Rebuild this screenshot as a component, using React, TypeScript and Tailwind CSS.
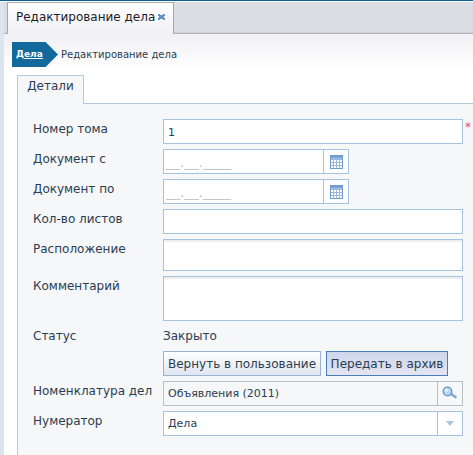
import type { ReactNode } from "react";

function CalendarIcon() {
  return (
    <svg width="13" height="14" viewBox="0 0 13 14" shapeRendering="crispEdges" aria-hidden="true">
      <path fill="#6f9bd0" d="M0 0h13v14H0z" />
      <path fill="#85aad6" d="M1 2h11v1H1z" />
      <path fill="#9bb9df" d="M1 3h11v10H1z" />
      {[5, 8, 11].map((y) =>
        [1, 4, 7, 10].map((x) => <rect key={`${x}-${y}`} x={x} y={y} width="2" height="2" fill="#fff" />)
      )}
    </svg>
  );
}

function SearchIcon() {
  return (
    <svg width="16" height="13" viewBox="0 0 16 13" aria-hidden="true">
      <path d="M8.5 7.5 14.5 11.5" stroke="#6d9bcb" strokeWidth="2.4" />
      <path d="M9.5 7.5 15 11" stroke="#b9d3ee" strokeWidth="0.8" />
      <circle cx="5.5" cy="5.5" r="4.3" fill="#b5d5f2" stroke="#6193c8" strokeWidth="1.3" />
      <circle cx="4.5" cy="4.3" r="1.8" fill="#e2f0fc" />
    </svg>
  );
}

function CloseIcon() {
  return (
    <svg width="7" height="6" viewBox="0 0 7 6" shapeRendering="crispEdges" aria-hidden="true">
      <path fill="#6293c4" d="M0 0h2v1h3V0h2v2H6v2h1v2H5V5H2v1H0V4h1V2H0z" />
    </svg>
  );
}

function Row({ label, htmlFor, children }: { label?: string; htmlFor?: string; children: ReactNode }) {
  return (
    <div className="grid grid-cols-[130px_1fr]">
      {htmlFor ? (
        <label htmlFor={htmlFor} className="h-5 text-xs leading-5">{label}</label>
      ) : (
        <span className="h-5 text-xs leading-5">{label}</span>
      )}
      {children}
    </div>
  );
}

const field = "block w-full min-w-0 border border-[#a5c3de] bg-white px-1 pt-0.5 text-[11px] outline-none";

function DateField({ id, label }: { id: string; label: string }) {
  return (
    <Row label={label} htmlFor={id}>
      <div className="flex h-[25px] w-[186px] border border-[#a5c3de] bg-white">
        <input
          id={id}
          placeholder="__.__.____"
          className="min-w-0 flex-1 px-0.5 text-sm outline-none placeholder:text-[#c3c5c8]"
        />
        <button
          type="button"
          aria-label={`Календарь: ${label}`}
          className="flex w-[25px] items-center justify-center border-l border-[#a5c3de]"
        >
          <CalendarIcon />
        </button>
      </div>
    </Row>
  );
}

export default function App() {
  return (
    <div className="flex min-h-screen flex-col border-t border-[#0a6094] bg-white pt-px font-['DejaVu_Sans',Verdana,sans-serif] text-[#2b3d50]">
      <div className="flex flex-1 border-l-4 border-[#dae5f0]">
        <div className="flex min-w-0 flex-1 flex-col bg-linear-to-b from-[#f0f0f5] from-[32px] to-white to-[68px]">
          <div className="flex h-8 bg-[#dadde2] pl-[3px] shadow-[inset_0_-1px_0_#b5b6ba,inset_0_-2px_0_#cfd1d5]">
            <div className="flex w-[167px] items-center gap-[3px] border-x border-t border-[#a8a9ae] bg-linear-to-b from-white to-[#f0f0f5] pb-[3px] pl-2 text-xs text-[#1c1c28]">
              <span className="whitespace-nowrap">Редактирование дела</span>
              <button type="button" aria-label="Закрыть"><CloseIcon /></button>
            </div>
          </div>

          <nav className="flex h-[41px] items-center pl-2 text-[10px]" aria-label="Путь">
            <a
              href="#cases"
              className="flex h-[25px] w-[46px] items-center bg-[#12699b] pl-1 text-[9px] font-bold text-white underline [clip-path:polygon(0_0,73%_0,100%_50%,73%_100%,0_100%)]"
            >
              Дела
            </a>
            <span className="pl-[3px] whitespace-nowrap">Редактирование дела</span>
          </nav>

          <div className="flex flex-1 flex-col pl-[13px]">
            <div className="z-10 -mb-px flex h-[29px] w-[67px] justify-center border border-b-0 border-[#b5cade] bg-[#f5f7f9] text-xs leading-5">
              Детали
            </div>
            <form
              onSubmit={(event) => event.preventDefault()}
              className="flex flex-1 flex-col gap-[5px] border-t border-l border-[#b5cade] bg-[#f5f7f9] pt-[15px] pr-2.5 pl-[15px]"
            >
              <Row label="Номер тома" htmlFor="volume">
                <div className="relative">
                  <input id="volume" defaultValue="1" required className={`${field} h-[25px]`} />
                  <span className="absolute top-0 left-full pl-0.5 text-xs leading-4 text-[#f0524f]">*</span>
                </div>
              </Row>
              <DateField id="from" label="Документ с" />
              <DateField id="to" label="Документ по" />
              <Row label="Кол-во листов" htmlFor="sheets">
                <input id="sheets" className={`${field} h-[25px]`} />
              </Row>
              <Row label="Расположение" htmlFor="location">
                <textarea id="location" className={`${field} h-8 resize-none shadow-[inset_0_2px_0_#eeeeef]`} />
              </Row>
              <Row label="Комментарий" htmlFor="comment">
                <textarea id="comment" className={`${field} h-[45px] resize-none shadow-[inset_0_2px_0_#eeeeef]`} />
              </Row>
              <Row label="Статус">
                <span className="text-xs leading-5">Закрыто</span>
              </Row>
              <Row>
                <div className="flex gap-[5px]">
                  <button
                    type="button"
                    className="h-[25px] w-[158px] border border-[#9cb3d2] bg-linear-to-b from-white to-[#dfe6f0] text-xs whitespace-nowrap"
                  >
                    Вернуть в пользование
                  </button>
                  <button
                    type="button"
                    className="h-[25px] w-[122px] border border-[#4a7cb9] bg-linear-to-b from-[#cdd7ea] to-[#e3e5f2] text-xs whitespace-nowrap"
                  >
                    Передать в архив
                  </button>
                </div>
              </Row>
              <Row label="Номенклатура дел" htmlFor="nomenclature">
                <div className="flex h-[25px] border border-[#bcbdc1]">
                  <input
                    id="nomenclature"
                    readOnly
                    value="Объявления (2011)"
                    className="min-w-0 flex-1 px-1 pt-0.5 text-[11px] outline-none"
                  />
                  <button
                    type="button"
                    aria-label="Найти"
                    className="flex w-[25px] items-center justify-center border-l border-[#bcbdc1] pb-0.5"
                  >
                    <SearchIcon />
                  </button>
                </div>
              </Row>
              <Row label="Нумератор" htmlFor="numerator">
                <div className="relative">
                  <select id="numerator" className={`${field} h-[25px] appearance-none`}>
                    <option>Дела</option>
                  </select>
                  <div className="pointer-events-none absolute inset-y-px right-px flex w-[25px] items-center justify-center border-l border-[#a5c3de]">
                    <svg width="8" height="5" viewBox="0 0 8 5" aria-hidden="true">
                      <path d="M0 0h8L4 5z" fill="#a9c3de" />
                    </svg>
                  </div>
                </div>
              </Row>
            </form>
          </div>
        </div>
      </div>
    </div>
  );
}
